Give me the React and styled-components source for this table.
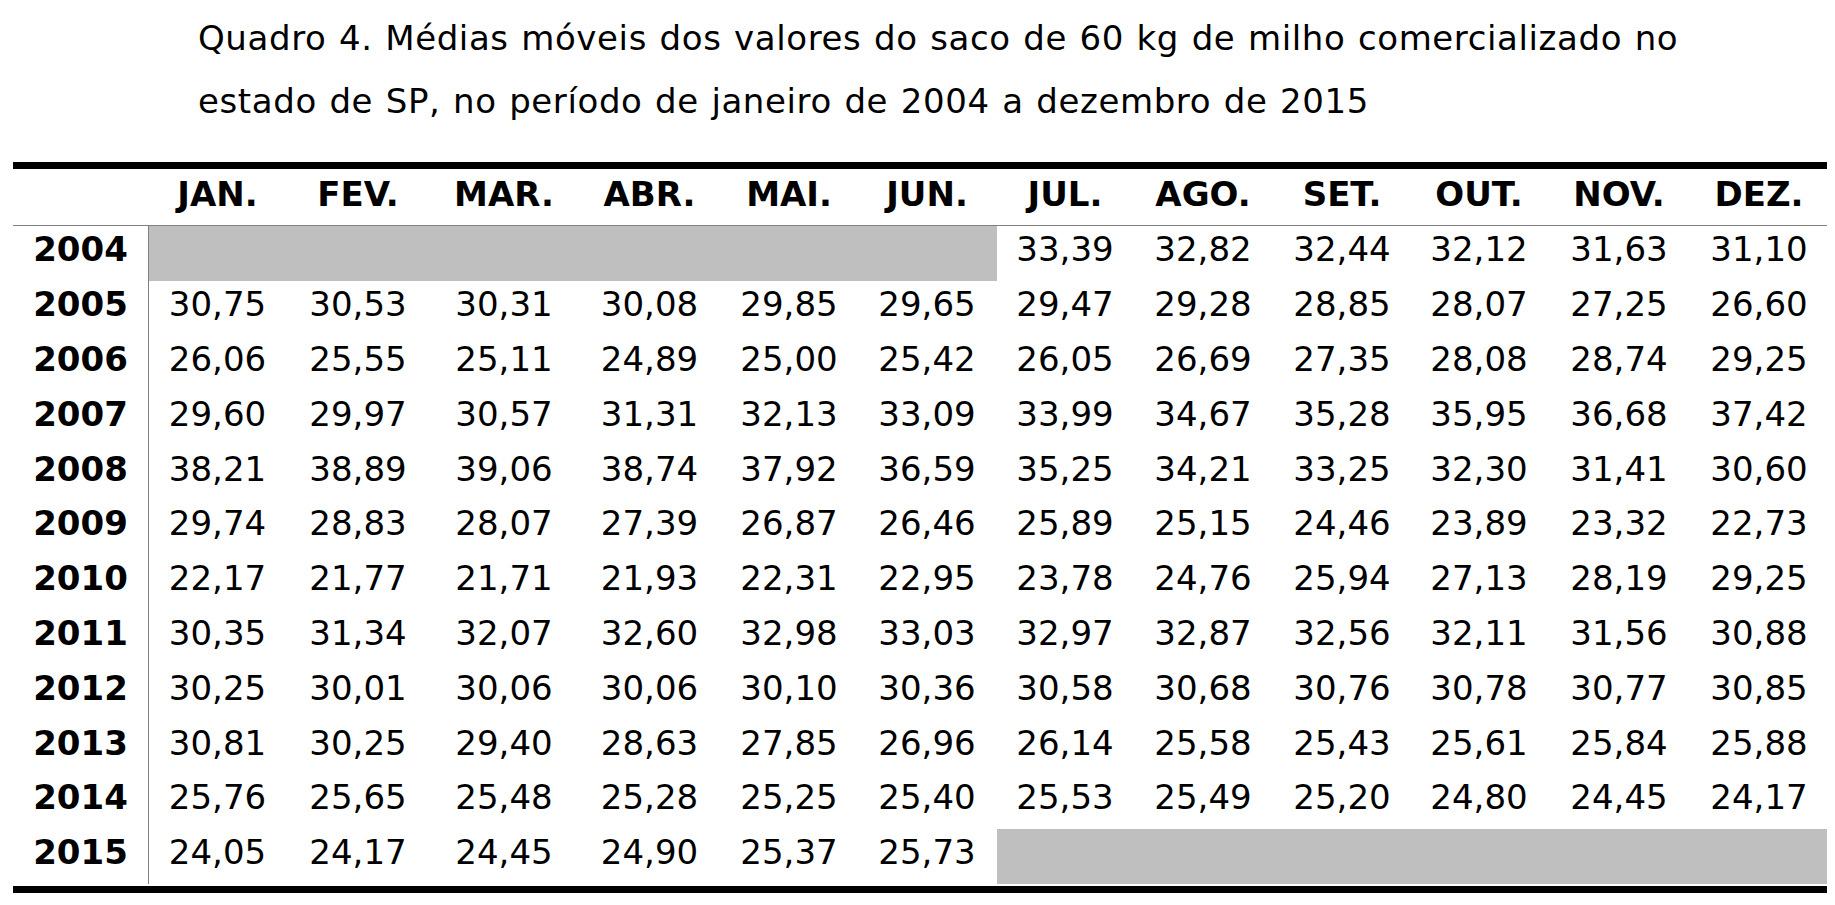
import styled, { createGlobalStyle } from 'styled-components';

const GlobalStyle = createGlobalStyle`
  body {
    margin: 0;
    background: #fff;
    color: #000;
    font-family: "DejaVu Sans", Verdana, sans-serif;
  }
`;

const Page = styled.div`
  padding-top: 7px;
`;

const Title = styled.p`
  margin: 0 0 29px 0;
  padding-left: 198px;
  font-size: 34px;
  line-height: 63px;
  letter-spacing: 0.6px;
  word-spacing: 1.2px;
  white-space: nowrap;
`;

const Frame = styled.div`
  margin-left: 13px;
  width: 1814px;
  border-top: 7px solid #000;
  border-bottom: 7px solid #000;
  padding-bottom: 2px;
`;

const Table = styled.table`
  width: 100%;
  table-layout: fixed;
  border-collapse: separate;
  border-spacing: 0;
  font-size: 34px;
`;

const HeadCell = styled.th`
  height: 57px;
  padding: 0 0 6px 0;
  box-sizing: border-box;
  font-weight: bold;
  text-align: center;
  vertical-align: middle;
  border-bottom: 1px solid #808080;
`;

const YearCell = styled.th`
  height: 54.8px;
  padding: 0 0 8px 0;
  box-sizing: border-box;
  font-weight: bold;
  text-align: center;
  vertical-align: middle;
  border-right: 1px solid #808080;
`;

const ValueCell = styled.td`
  height: 54.8px;
  padding: 0 0 8px 0;
  box-sizing: border-box;
  font-weight: normal;
  text-align: center;
  vertical-align: middle;
  white-space: nowrap;
  background: ${p => (p.$blank ? '#bfbfbf' : 'transparent')};
`;

const months = ['JAN.', 'FEV.', 'MAR.', 'ABR.', 'MAI.', 'JUN.', 'JUL.', 'AGO.', 'SET.', 'OUT.', 'NOV.', 'DEZ.'];
const widths = [137, 144, 148, 143, 136, 140, 136, 140, 138, 136, 144, 136];

const rows = [
  ['2004', [null, null, null, null, null, null, '33,39', '32,82', '32,44', '32,12', '31,63', '31,10']],
  ['2005', ['30,75', '30,53', '30,31', '30,08', '29,85', '29,65', '29,47', '29,28', '28,85', '28,07', '27,25', '26,60']],
  ['2006', ['26,06', '25,55', '25,11', '24,89', '25,00', '25,42', '26,05', '26,69', '27,35', '28,08', '28,74', '29,25']],
  ['2007', ['29,60', '29,97', '30,57', '31,31', '32,13', '33,09', '33,99', '34,67', '35,28', '35,95', '36,68', '37,42']],
  ['2008', ['38,21', '38,89', '39,06', '38,74', '37,92', '36,59', '35,25', '34,21', '33,25', '32,30', '31,41', '30,60']],
  ['2009', ['29,74', '28,83', '28,07', '27,39', '26,87', '26,46', '25,89', '25,15', '24,46', '23,89', '23,32', '22,73']],
  ['2010', ['22,17', '21,77', '21,71', '21,93', '22,31', '22,95', '23,78', '24,76', '25,94', '27,13', '28,19', '29,25']],
  ['2011', ['30,35', '31,34', '32,07', '32,60', '32,98', '33,03', '32,97', '32,87', '32,56', '32,11', '31,56', '30,88']],
  ['2012', ['30,25', '30,01', '30,06', '30,06', '30,10', '30,36', '30,58', '30,68', '30,76', '30,78', '30,77', '30,85']],
  ['2013', ['30,81', '30,25', '29,40', '28,63', '27,85', '26,96', '26,14', '25,58', '25,43', '25,61', '25,84', '25,88']],
  ['2014', ['25,76', '25,65', '25,48', '25,28', '25,25', '25,40', '25,53', '25,49', '25,20', '24,80', '24,45', '24,17']],
  ['2015', ['24,05', '24,17', '24,45', '24,90', '25,37', '25,73', null, null, null, null, null, null]],
];

export default function App() {
  return (
    <Page>
      <GlobalStyle />
      <Title>
        Quadro 4. Médias móveis dos valores do saco de 60 kg de milho comercializado no
        <br />
        estado de SP, no período de janeiro de 2004 a dezembro de 2015
      </Title>
      <Frame>
        <Table>
          <colgroup>
            <col style={{ width: 136 }} />
            {widths.map((w, i) => (
              <col key={i} style={{ width: w }} />
            ))}
          </colgroup>
          <thead>
            <tr>
              <HeadCell />
              {months.map(m => (
                <HeadCell key={m}>{m}</HeadCell>
              ))}
            </tr>
          </thead>
          <tbody>
            {rows.map(([year, values]) => (
              <tr key={year}>
                <YearCell>{year}</YearCell>
                {values.map((v, i) => (
                  <ValueCell key={i} $blank={v === null}>{v}</ValueCell>
                ))}
              </tr>
            ))}
          </tbody>
        </Table>
      </Frame>
    </Page>
  );
}
